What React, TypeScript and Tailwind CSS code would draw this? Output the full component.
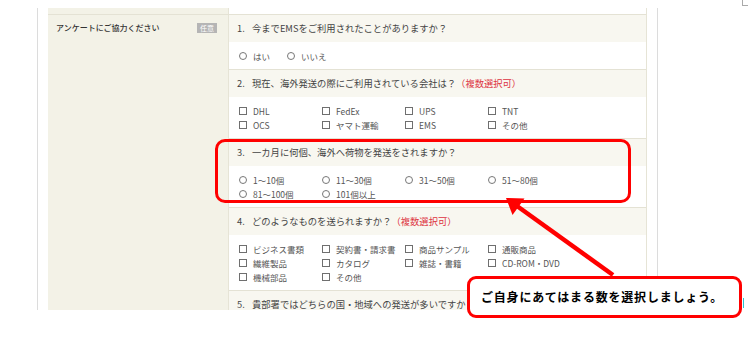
import React from "react";

const FONT = '"Noto Sans CJK JP", "Noto Sans", sans-serif';

function Check({ label }: { label: string }) {
  return (
    <div className="flex items-center h-[14px]">
      <span className="inline-block w-[8px] h-[8px] border border-[#6f6f6f] bg-white shrink-0" />
      <span className="ml-[6px] text-[8.5px] text-[#555] whitespace-nowrap">{label}</span>
    </div>
  );
}

function Radio({ label }: { label: string }) {
  return (
    <div className="flex items-center h-[14px]">
      <span className="inline-block w-[8px] h-[8px] rounded-full border border-[#777] bg-white shrink-0" />
      <span className="ml-[6px] text-[8.5px] text-[#555] whitespace-nowrap">{label}</span>
    </div>
  );
}

function Header({ n, text, multi }: { n: string; text: string; multi?: boolean }) {
  return (
    <div className="h-[27px] bg-[#f8f7f0] flex items-center pl-[8px] text-[9.3px] text-[#444] whitespace-nowrap">
      <span className="inline-block w-[15px]">{n}</span>
      <span>{text}</span>
      {multi && <span className="text-[#dd3340]">（複数選択可）</span>}
    </div>
  );
}

function Grid({ items, radio }: { items: string[]; radio?: boolean }) {
  return (
    <div className="pl-[10px] pt-[7px] pb-[6px] bg-white grid grid-cols-[83px_83px_83px_83px]">
      {items.map((it) => (radio ? <Radio key={it} label={it} /> : <Check key={it} label={it} />))}
    </div>
  );
}

export default function App() {
  return (
    <div className="relative w-[748px] h-[340px] bg-white overflow-hidden" style={{ fontFamily: FONT }}>
      {/* corner mark */}
      <div className="absolute left-[742px] top-0 w-[1px] h-[6px] bg-[#aaa]" />
      <div className="absolute left-[742px] top-[5px] w-[6px] h-[1px] bg-[#aaa]" />

      <div className="pt-[8px] pl-[37px]">
        <div className="w-[621px] h-[302px] border-x border-[#dcdcdc] px-[10px] overflow-hidden">
          <div className="w-[599px] border-r border-[#e6e4d6]">
            {/* stub row */}
            <div className="flex h-[6px]">
              <div className="w-[180px] bg-[#f3f2e7]" />
              <div className="flex-1 bg-white border-l border-[#e6e4d6]" />
            </div>
            <div className="flex border-t border-[#e4e2d4]">
              <div className="w-[180px] bg-[#f3f2e7] shrink-0 flex items-start justify-between pl-[8px] pr-[11px] pt-[7px]">
                <span className="text-[8px] leading-[12px] text-[#333] font-medium whitespace-nowrap">アンケートにご協力ください</span>
                <span className="mt-[1px] h-[10px] w-[20px] bg-[#b5b5b5] text-white text-[7px] leading-[10px] text-center">任意</span>
              </div>
              <div className="flex-1 border-l border-[#e6e4d6] flex flex-col">
                <Header n="1." text="今までEMSをご利用されたことがありますか？" />
                <div className="pl-[10px] pt-[7px] pb-[6px] bg-white flex gap-[17px]">
                  <Radio label="はい" />
                  <Radio label="いいえ" />
                </div>
                <div className="border-t border-[#e4e2d4]">
                  <Header n="2." text="現在、海外発送の際にご利用されている会社は？" multi />
                  <Grid items={["DHL", "FedEx", "UPS", "TNT", "OCS", "ヤマト運輸", "EMS", "その他"]} />
                </div>
                <div className="border-t border-[#e4e2d4]">
                  <Header n="3." text="一カ月に何個、海外へ荷物を発送をされますか？" />
                  <Grid radio items={["1〜10個", "11〜30個", "31〜50個", "51〜80個", "81〜100個", "101個以上"]} />
                </div>
                <div className="border-t border-[#e4e2d4]">
                  <Header n="4." text="どのようなものを送られますか？" multi />
                  <Grid
                    items={[
                      "ビジネス書類",
                      "契約書・請求書",
                      "商品サンプル",
                      "通販商品",
                      "繊維製品",
                      "カタログ",
                      "雑誌・書籍",
                      "CD-ROM・DVD",
                      "機械部品",
                      "その他",
                    ]}
                  />
                </div>
                <div className="border-t border-[#e4e2d4]">
                  <Header n="5." text="貴部署ではどちらの国・地域への発送が多いですか？" />
                  <div className="h-[40px] bg-white" />
                </div>
              </div>
            </div>
          </div>
        </div>
      </div>

      {/* annotation: red box */}
      <div className="absolute left-[215px] top-[139px] w-[416px] h-[64px] border-[3px] border-[#ff0000] rounded-[10px]" />

      {/* arrow */}
      <svg className="absolute left-0 top-0" width="748" height="340" viewBox="0 0 748 340">
        <line x1="517" y1="206" x2="613" y2="275" stroke="#ff0000" strokeWidth="4.5" />
        <polygon points="506,198 524.5,198.5 512.5,215" fill="#ff0000" />
      </svg>

      {/* callout */}
      <div className="absolute left-[467px] top-[276px] w-[275px] h-[42px] border-[3px] border-[#ff0000] rounded-[9px] bg-white flex items-center pl-[11px]">
        <span className="text-[12px] tracking-[0.8px] text-black font-semibold whitespace-nowrap">ご自身にあてはまる数を選択しましょう。</span>
      </div>
      <div className="absolute left-[743px] top-[298px] w-[1px] h-[10px] bg-[#29c4d0]" />
    </div>
  );
}
